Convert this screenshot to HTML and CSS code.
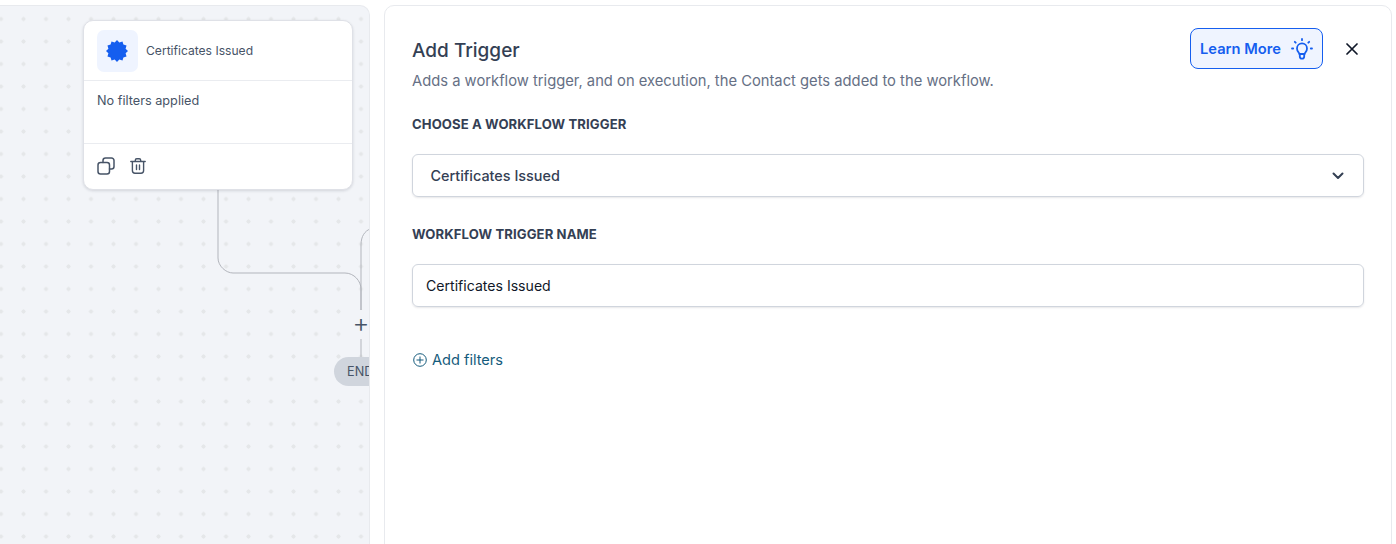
FILE: index.html
```html
<!DOCTYPE html>
<html lang="en">
<head>
<meta charset="utf-8">
<title>Add Trigger</title>
<link rel="stylesheet" href="styles.css">
</head>
<body>
<div class="layout">
  <section class="canvas">
    <svg class="wires" width="370" height="539" viewBox="0 0 370 539" fill="none">
      <path d="M218 184V252C218 260 226 267 233 267H345C354 267 361 275 361 283V310" stroke="#b2b5bc"/>
      <path d="M361 310V239C361 230 365 225 370 223" stroke="#b2b5bc"/>
      <path d="M361 333V352" stroke="#b2b5bc"/>
    </svg>
    <article class="node">
      <header class="node-head">
        <span class="node-tile">
          <svg width="24" height="24" viewBox="0 0 24 24"><polygon fill="#155eef" points="12,1 14.3,3.4 17.5,2.47 18.4,5.6 21.53,6.5 20.6,9.7 23,12 20.6,14.3 21.53,17.5 18.4,18.4 17.5,21.53 14.3,20.6 12,23 9.7,20.6 6.5,21.53 5.6,18.4 2.47,17.5 3.4,14.3 1,12 3.4,9.7 2.47,6.5 5.6,5.6 6.5,2.47 9.7,3.4"/></svg>
        </span>
        <span class="node-title">Certificates Issued</span>
      </header>
      <div class="node-body">No filters applied</div>
      <footer class="node-foot">
        <svg width="18" height="18" viewBox="0 0 18 18" fill="none" stroke="#475467" stroke-width="1.5" stroke-linejoin="round" stroke-linecap="round"><rect x="1" y="5.5" width="11.5" height="11.5" rx="2.5"/><path d="M6 5.5V3.5A2.5 2.5 0 0 1 8.5 1H14.5A2.5 2.5 0 0 1 17 3.5V9.5A2.5 2.5 0 0 1 14.5 12H12.5"/></svg>
        <svg width="16" height="16" viewBox="0 0 16 16" fill="none" stroke="#475467" stroke-width="1.4" stroke-linecap="round" stroke-linejoin="round"><path d="M.8 3.5H15.2M5.3 3.5V2.3C5.3 1.4 6 .8 6.8 .8H9.2C10 .8 10.7 1.4 10.7 2.3V3.5M2.4 3.5V12.5C2.4 14 3.5 15.2 5 15.2H11C12.5 15.2 13.6 14 13.6 12.5V3.5M6.5 7V11.5M9.5 7V11.5"/></svg>
      </footer>
    </article>
    <span class="add-step">+</span>
    <span class="end-pill">END</span>
  </section>
  <main class="panel">
    <header class="panel-head">
      <div>
        <h1 class="panel-title">Add Trigger</h1>
        <p class="panel-sub">Adds a workflow trigger, and on execution, the Contact gets added to the workflow.</p>
      </div>
      <div class="panel-actions">
        <button class="learn">Learn More
          <svg width="22" height="22" viewBox="0 0 22 22" fill="none" stroke="#155eef" stroke-width="1.8" stroke-linecap="round" stroke-linejoin="round"><path d="M11 1V2.2M3.8 3.8L4.7 4.7M18.2 3.8L17.3 4.7M1 10.5H2.2M19.8 10.5H21"/><path d="M8.3 16C8.3 14.6 6 13.5 6 10.4A5 5 0 0 1 16 10.4C16 13.5 13.7 14.6 13.7 16Z"/><path d="M8.8 16.3V18.4C8.8 20 9.7 20.6 11 20.6C12.3 20.6 13.2 20 13.2 18.4V16.3"/></svg>
        </button>
        <svg class="close" width="12" height="12" viewBox="0 0 12 12" fill="none" stroke="#101828" stroke-width="1.7" stroke-linecap="round"><path d="M1 1L11 11M11 1L1 11"/></svg>
      </div>
    </header>
    <h2 class="field-label first">CHOOSE A WORKFLOW TRIGGER</h2>
    <div class="select">
      <span>Certificates Issued</span>
      <svg width="12" height="8" viewBox="0 0 12 8" fill="none" stroke="#344054" stroke-width="2" stroke-linecap="round" stroke-linejoin="round"><path d="M1.5 1.5L6 6L10.5 1.5"/></svg>
    </div>
    <h2 class="field-label second">WORKFLOW TRIGGER NAME</h2>
    <div class="input">Certificates Issued</div>
    <a class="add-filters">
      <svg width="14" height="14" viewBox="0 0 14 14" fill="none" stroke="#155b7c" stroke-width="1"><circle cx="7" cy="7" r="6.3"/><path d="M7 3.5V10.5M3.5 7H10.5"/></svg>
      Add filters
    </a>
  </main>
</div>
</body>
</html>
```
FILE: styles.css
```css
* { box-sizing: border-box; }
html, body { margin: 0; height: 100%; overflow: hidden; background: #fff; }
body { font-family: Inter, "Noto Sans", sans-serif; color: #344054; }
.layout { display: flex; gap: 14px; height: 544px; padding: 5px 4px 0 0; align-items: stretch; }
.canvas {
  position: relative; flex: 0 0 370px; height: 560px; overflow: hidden;
  background-color: #f2f4f8;
  background-image: radial-gradient(circle, #e5e7e9 1.8px, transparent 2.3px);
  background-size: 22.5px 22.5px;
  background-position: -10.25px 1.75px;
  border: 1px solid #e8eaee; border-left: 0; border-top-right-radius: 10px;
}
.wires { position: absolute; left: 0; top: 0; }
.node {
  position: absolute; left: 83px; top: 14px; width: 270px; height: 170px;
  background: #fff; border: 1px solid #dfe1e7; border-radius: 10px;
  box-shadow: 0 1px 3px rgba(16, 24, 40, .14);
}
.node-head { display: flex; align-items: center; gap: 8px; height: 60px; padding: 0 13px; border-bottom: 1px solid #eaecf0; }
.node-tile { display: flex; align-items: center; justify-content: center; width: 41px; height: 42px; padding-right: 1px; border-radius: 7px; background: #eff4ff; }
.node-title { font-size: 12.1px; color: #475467; }
.node-body { height: 63px; padding: 11px 13px 0; font-size: 12.7px; line-height: 18px; color: #475467; border-bottom: 1px solid #eaecf0; }
.node-foot { display: flex; align-items: center; gap: 15px; height: 44px; padding: 0 13px; }
.add-step { position: absolute; left: 351px; top: 304px; width: 20px; height: 29px; text-align: center; font-size: 26px; line-height: 26px; color: #475467; background: #f2f4f8; font-weight: 300; }
.end-pill { position: absolute; left: 334px; top: 351px; width: 56px; height: 29px; padding-left: 13px; border-radius: 15px; background: #d0d5dd; color: #475467; font-size: 12.7px; line-height: 29px; }
.panel { flex: 1; height: 560px; padding: 22px 27px 0; background: #fff; border: 1px solid #e8eaee; border-radius: 10px 10px 0 0; }
.panel-head { display: flex; justify-content: space-between; align-items: flex-start; }
.panel-title { margin: 11px 0 0; font-size: 19px; line-height: 24px; font-weight: 500; color: #344054; }
.panel-sub { margin: 8px 0 0; font-size: 14.75px; line-height: 20px; color: #667085; }
.panel-actions { display: flex; align-items: center; gap: 23px; margin-right: 6px; }
.learn { display: flex; align-items: center; gap: 10px; width: 133px; height: 41px; padding: 0 9px; border: 1px solid #155eef; border-radius: 8px; background: #eff4ff; color: #155eef; font: 600 14.7px Inter, sans-serif; white-space: nowrap; }
.field-label { margin: 0; font-size: 13.1px; line-height: 18px; font-weight: 700; color: #344054; letter-spacing: .1px; }
.first { margin-top: 24px; }
.second { margin-top: 28px; }
.select, .input { display: flex; align-items: center; height: 43px; border: 1px solid #d0d5dd; border-radius: 6px; box-shadow: 0 1px 2px rgba(16, 24, 40, .1); }
.select { justify-content: space-between; margin-top: 21px; padding: 0 19px 0 17.5px; font-size: 14.4px; font-weight: 500; }
.input { margin-top: 21px; padding: 0 13px; font-size: 14.1px; color: #101828; }
.add-filters { display: flex; align-items: center; gap: 5px; margin-top: 43px; padding-left: 1px; font-size: 14.6px; line-height: 20px; color: #155b7c; }
```
